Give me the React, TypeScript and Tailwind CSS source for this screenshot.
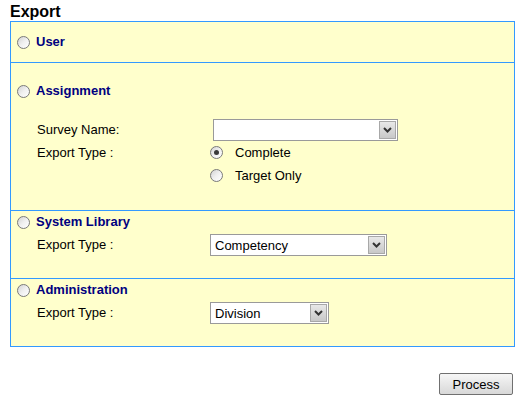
import React from 'react'

function Radio({ checked = false }: { checked?: boolean }) {
    return (
        <span className="w-[13px] h-[13px] rounded-full border border-[#7a7a7a] bg-gradient-to-br from-[#d2d2d2] via-[#f0f0f0] to-white flex items-center justify-center shrink-0">
            {checked && <span className="w-[5px] h-[5px] rounded-full bg-[#3a3a3a]"></span>}
        </span>
    )
}

function Select({ value, width }: { value: string; width: string }) {
    return (
        <div className={`${width} h-[22px] border border-[#9a9a9a] bg-white flex items-center justify-between pl-[4px] pr-[1px]`}>
            <span className="text-[13px] text-black leading-none">{value}</span>
            <span className="w-[17px] h-[18px] border border-[#a8a8a8] bg-gradient-to-b from-[#e8e8e8] to-[#c8c8c8] flex items-center justify-center">
                <svg width="9" height="6" viewBox="0 0 9 6">
                    <path d="M1 1 L4.5 4.5 L8 1" stroke="#333" strokeWidth="2" fill="none" />
                </svg>
            </span>
        </div>
    )
}

export default function App() {
    return (
        <div className="w-[525px] h-[400px] bg-white font-['Liberation_Sans',Arial,sans-serif] text-black">
            {/* Title */}
            <h1 className="pl-[10px] pt-[2px] text-[16px] font-bold leading-[19px]">Export</h1>

            {/* Panel */}
            <div className="ml-[10px] w-[505px] border border-[#3399ff] bg-[#ffffcc]">
                {/* User */}
                <div className="h-[41px] border-b border-[#3399ff] flex items-center gap-[6px] pl-[6px]">
                    <Radio />
                    <span className="text-[13px] font-bold text-[#000080]">User</span>
                </div>

                {/* Assignment */}
                <div className="h-[148px] border-b border-[#3399ff] pt-[19px]">
                    <div className="h-[18px] flex items-center gap-[6px] pl-[6px]">
                        <Radio />
                        <span className="text-[13px] font-bold text-[#000080]">Assignment</span>
                    </div>
                    <div className="mt-[19px] grid grid-cols-[199px_1fr] text-[13px]">
                        <div className="h-[22px] flex items-center pl-[26px]">Survey Name:</div>
                        <div className="h-[22px] flex items-center pl-[3px]">
                            <Select value="" width="w-[185px]" />
                        </div>
                        <div className="h-[23px] flex items-center pl-[26px]">Export Type :</div>
                        <div className="h-[23px] flex items-center gap-[12px]">
                            <Radio checked />
                            <span>Complete</span>
                        </div>
                        <div className="h-[23px]"></div>
                        <div className="h-[23px] flex items-center gap-[12px]">
                            <Radio />
                            <span>Target Only</span>
                        </div>
                    </div>
                </div>

                {/* System Library */}
                <div className="h-[68px] border-b border-[#3399ff] pt-[2px]">
                    <div className="h-[18px] flex items-center gap-[6px] pl-[6px]">
                        <Radio />
                        <span className="text-[13px] font-bold text-[#000080]">System Library</span>
                    </div>
                    <div className="mt-[3px] flex items-center text-[13px]">
                        <span className="w-[199px] pl-[26px]">Export Type :</span>
                        <Select value="Competency" width="w-[177px]" />
                    </div>
                </div>

                {/* Administration */}
                <div className="h-[67px] pt-[2px]">
                    <div className="h-[18px] flex items-center gap-[6px] pl-[6px]">
                        <Radio />
                        <span className="text-[13px] font-bold text-[#000080]">Administration</span>
                    </div>
                    <div className="mt-[3px] flex items-center text-[13px]">
                        <span className="w-[199px] pl-[26px]">Export Type :</span>
                        <Select value="Division" width="w-[119px]" />
                    </div>
                </div>
            </div>

            {/* Actions */}
            <div className="flex justify-end pr-[12px] mt-[26px]">
                <button className="w-[74px] h-[22px] border border-[#707070] rounded-[2px] bg-gradient-to-b from-[#f6f6f6] to-[#d8d8d8] text-[13px] leading-none">
                    Process
                </button>
            </div>
        </div>
    )
}
